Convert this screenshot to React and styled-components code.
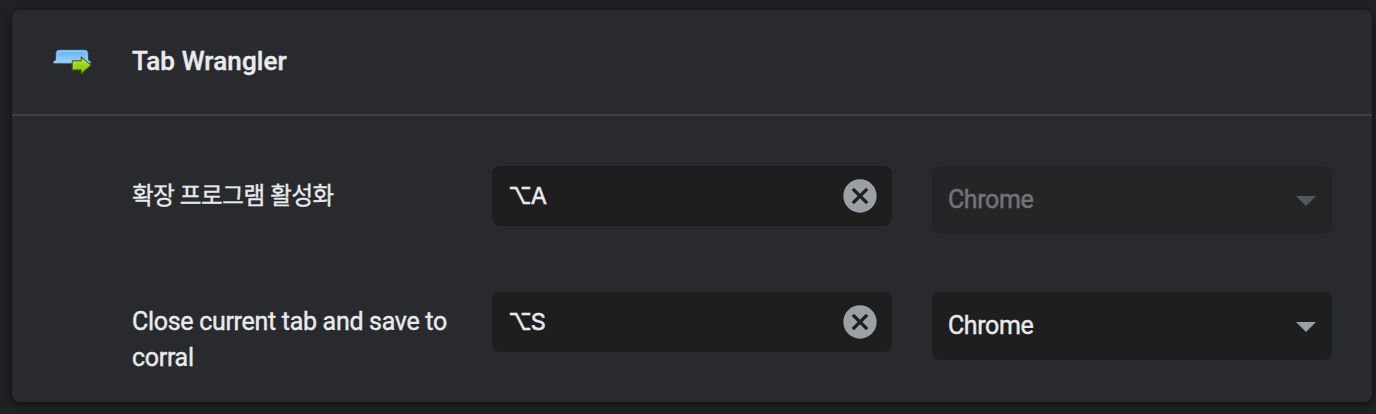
import React from "react";
import styled, { createGlobalStyle } from "styled-components";

const GlobalStyle = createGlobalStyle`
  * { box-sizing: border-box; }
  body {
    margin: 0;
    background: #202124;
    color: #e8eaed;
    font-family: Roboto, "Noto Sans CJK KR", sans-serif;
    font-size: 25px;
    letter-spacing: -0.4px;
    -webkit-text-stroke: 0.4px currentColor;
    -webkit-font-smoothing: antialiased;
  }
`;

const Page = styled.main`
  height: 414px;
  padding: 10px 4px 12px 12px;
  overflow: hidden;
`;

const Card = styled.section`
  height: 392px;
  border-radius: 8px;
  background: #292a2d;
  box-shadow: 0 2px 4px rgba(0, 0, 0, 0.3), 0 2px 6px 2px rgba(0, 0, 0, 0.18);
`;

const CardHeader = styled.header`
  display: flex;
  align-items: center;
  height: 106px;
  padding: 0 40px;
  border-bottom: 2px solid #3f4042;
`;

const TabIcon = styled.svg`
  display: block;
  width: 40px;
  height: 40px;
  margin-right: 40px;
`;

const Title = styled.h2`
  margin: -2px 0 0;
  font-size: 26px;
  line-height: 36px;
  font-weight: 500;
  letter-spacing: 0.1px;
`;

const Shortcuts = styled.div`
  padding: 50px 40px 0 120px;
`;

const ShortcutRow = styled.div`
  display: grid;
  grid-template-columns: 320px 400px 400px;
  column-gap: 40px;
  align-items: start;
  height: 126px;
`;

const Label = styled.div`
  padding-top: 12px;
  font-size: ${(p) => (p.$korean ? "23.5px" : "25px")};
  letter-spacing: ${(p) => (p.$korean ? "-0.4px" : "-0.3px")};
  line-height: 36px;
`;

const KeyField = styled.div`
  display: flex;
  align-items: center;
  justify-content: space-between;
  height: 60px;
  padding: 0 12px 0 16px;
  border-radius: 8px;
  background: #1e1e1f;
`;

const Keys = styled.span`
  font-family: Inter, sans-serif;
  font-size: 23.5px;
  line-height: 30px;
  letter-spacing: -1.2px;
  -webkit-text-stroke-width: 0.5px;
`;

const ClearButton = styled.button`
  width: 40px;
  height: 40px;
  padding: 0;
  border: 0;
  background: none;

  svg { display: block; }
`;

const ScopeSelect = styled.div`
  display: flex;
  align-items: center;
  justify-content: space-between;
  height: 68px;
  padding: 0 16px 1px;
  border-radius: 8px;
  background: #1e1e1f;
  opacity: ${(p) => (p.$disabled ? 0.38 : 1)};
`;

const Caret = styled.svg`
  display: block;
  width: 20px;
  height: 10px;
  margin-top: 3px;
`;

const shortcuts = [
  { label: "확장 프로그램 활성화", keys: "⌥A", korean: true, disabled: true },
  { label: "Close current tab and save to corral", keys: "⌥S" },
];

function ExtensionIcon() {
  return (
    <TabIcon viewBox="0 0 40 40" aria-hidden="true">
      <defs>
        <linearGradient id="tabFill" x1="0" y1="0" x2="0" y2="1">
          <stop offset="0" stopColor="#62b2f2" />
          <stop offset="1" stopColor="#a3d2f8" />
        </linearGradient>
        <linearGradient id="arrowFill" x1="0" y1="0" x2="0" y2="1">
          <stop offset="0" stopColor="#b5dc3c" />
          <stop offset="1" stopColor="#83c80d" />
        </linearGradient>
      </defs>
      <path d="M1.5 21.3V19.5Q4 19 4 17V11Q4 8 7 8H33Q36 8 36 11V17Q36 19 38.5 19.5V21.3Z" fill="url(#tabFill)" stroke="#3b719f" strokeWidth="0.8" />
      <path d="M2 20.2Q5.2 19.5 5.2 17V11.5Q5.2 9.2 7.5 9.2H32.5Q34.8 9.2 34.8 11.5V17Q34.8 19.5 38 20.2" fill="none" stroke="#9bd0fb" strokeWidth="1.2" />
      <path d="M20.3 18.9H29.2V14.9L38.9 23.2L29.2 31.8V27.9H20.3Z" fill="url(#arrowFill)" stroke="#426b09" strokeWidth="1.1" strokeLinejoin="round" />
      <path d="M21.6 26.3V20.3H30.5V17.7L37 23.2" fill="none" stroke="#b9e04a" strokeWidth="0.9" />
    </TabIcon>
  );
}

function Shortcut({ label, keys, korean, disabled }) {
  return (
    <ShortcutRow>
      <Label $korean={korean}>{label}</Label>
      <KeyField>
        <Keys>{keys}</Keys>
        <ClearButton aria-label="Clear shortcut">
          <svg width="40" height="40" viewBox="0 0 24 24" fill="#9aa0a6">
            <path d="M12 2C6.47 2 2 6.47 2 12s4.47 10 10 10 10-4.47 10-10S17.53 2 12 2zm5 13.59L15.59 17 12 13.41 8.41 17 7 15.59 10.59 12 7 8.41 8.41 7 12 10.59 15.59 7 17 8.41 13.41 12 17 15.59z" />
          </svg>
        </ClearButton>
      </KeyField>
      <ScopeSelect $disabled={disabled}>
        Chrome
        <Caret viewBox="0 0 20 10"><path d="M0 0H20L10 10Z" fill="#9aa0a6" /></Caret>
      </ScopeSelect>
    </ShortcutRow>
  );
}

export default function App() {
  return (
    <>
      <GlobalStyle />
      <Page>
        <Card>
          <CardHeader>
            <ExtensionIcon />
            <Title>Tab Wrangler</Title>
          </CardHeader>
          <Shortcuts>
            {shortcuts.map((s) => <Shortcut key={s.keys} {...s} />)}
          </Shortcuts>
        </Card>
      </Page>
    </>
  );
}
